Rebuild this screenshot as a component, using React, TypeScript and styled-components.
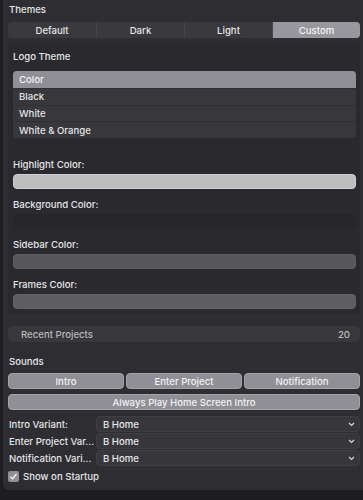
import React from "react";
import styled, { createGlobalStyle } from "styled-components";

const Global = createGlobalStyle`
  html, body { margin: 0; padding: 0; background: #1d1d1f; }
  body { font-family: Inter, "Noto Sans", sans-serif; -webkit-font-smoothing: antialiased; }
  * { box-sizing: border-box; }
`;

const Outer = styled.div`
  width: 363px;
  height: 500px;
  background: #1d1d1f;
  display: flex;
  overflow: hidden;
`;

const Panel = styled.div`
  margin-left: 3px;
  width: 360px;
  height: 490px;
  background: #2e2e32;
  border-radius: 0 0 0 6px;
  padding: 3px 3px 0 5px;
  display: flex;
  flex-direction: column;
  color: #e4e4e6;
  font-size: 9.6px;
  font-weight: 500;
`;

const SectionTitle = styled.div<{ $mt?: number }>`
  height: 13px;
  line-height: 13px;
  padding-left: 1px;
  margin-top: ${(p) => p.$mt ?? 0}px;
  color: #e6e6e8;
`;

const Segmented = styled.div<{ $mt?: number }>`
  margin-top: ${(p) => p.$mt ?? 0}px;
  display: grid;
  grid-auto-flow: column;
  grid-auto-columns: 1fr;
  height: 16px;
  border-radius: 4px;
  overflow: hidden;
  background: #3a3a3e;
`;

const Seg = styled.div<{ $active?: boolean }>`
  display: flex;
  align-items: center;
  justify-content: center;
  background: ${(p) => (p.$active ? "#97979d" : "#3a3a3e")};
  color: ${(p) => (p.$active ? "#f4f4f6" : "#e4e4e6")};
  border-left: 1px solid #46464a;
  &:first-child { border-left: none; }
`;

const ButtonRow = styled.div<{ $mt?: number }>`
  margin-top: ${(p) => p.$mt ?? 0}px;
  display: grid;
  grid-template-columns: 1fr 1fr 1fr;
  gap: 2px;
`;

const GrayButton = styled.div`
  height: 16px;
  border-radius: 4px;
  background: #8f8f95;
  border: 1px solid #a3a3a8;
  color: #f2f2f4;
  display: flex;
  align-items: center;
  justify-content: center;
`;

const WideButton = styled(GrayButton)`
  margin-top: 5px;
`;

const Card = styled.div`
  margin-top: 6px;
  background: #2a2a2e;
  border-radius: 5px;
  padding: 6px 4px 5px 5px;
  display: flex;
  flex-direction: column;
`;

const CardLabel = styled.div<{ $mt?: number }>`
  margin-top: ${(p) => p.$mt ?? 0}px;
  height: 13px;
  line-height: 13px;
  color: #e4e4e6;
`;

const List = styled.div`
  margin-top: 8px;
  background: #38383c;
  border-radius: 4px;
  overflow: hidden;
  display: flex;
  flex-direction: column;
`;

const ListItem = styled.div<{ $selected?: boolean }>`
  height: 16.75px;
  display: flex;
  align-items: center;
  padding-left: 6px;
  background: ${(p) => (p.$selected ? "#8f8f95" : "#38383c")};
  color: ${(p) => (p.$selected ? "#f4f4f6" : "#e4e4e6")};
  border-top: 1px solid #2f2f33;
  &:first-child { border-top: none; }
`;

const Swatch = styled.div<{ $color: string; $border: string }>`
  margin-top: 3px;
  height: 15px;
  border-radius: 4px;
  background: ${(p) => p.$color};
  border: 1px solid ${(p) => p.$border};
`;

const StatRow = styled.div`
  margin-top: 12px;
  height: 16px;
  border-radius: 5px;
  background: #38383c;
  display: flex;
  align-items: center;
  justify-content: space-between;
  padding: 0 10px 0 13px;
  color: #b9b9bd;
`;

const VariantGrid = styled.div`
  margin-top: 6px;
  display: grid;
  grid-template-columns: 88px 1fr;
  row-gap: 1px;
`;

const VariantLabel = styled.div`
  height: 16px;
  display: flex;
  align-items: center;
  padding-left: 1px;
  white-space: nowrap;
  overflow: hidden;
  color: #e4e4e6;
`;

const Select = styled.div`
  height: 16px;
  background: #37373b;
  border: 1px solid #3f3f43;
  border-radius: 4px;
  display: flex;
  align-items: center;
  justify-content: space-between;
  padding: 0 4px 0 6px;
  color: #e8e8ea;
`;

const CheckRow = styled.label`
  margin-top: 3px;
  height: 14px;
  display: flex;
  align-items: center;
  gap: 4px;
  color: #e4e4e6;
`;

const CheckBox = styled.span`
  width: 11px;
  height: 11px;
  border-radius: 2px;
  background: #8f8f95;
  display: flex;
  align-items: center;
  justify-content: center;
`;

const Chevron = () => (
  <svg width="7" height="5" viewBox="0 0 7 5">
    <path d="M1 1 L3.5 3.5 L6 1" fill="none" stroke="#d8d8dc" strokeWidth="1.2" />
  </svg>
);

const Check = () => (
  <svg width="9" height="9" viewBox="0 0 9 9">
    <path d="M1.5 4.7 L3.6 6.8 L7.5 2" fill="none" stroke="#f2f2f4" strokeWidth="1.4" />
  </svg>
);

const variants = ["Intro Variant:", "Enter Project Var...", "Notification Vari..."];

export default function App() {
  return (
    <>
      <Global />
      <Outer>
        <Panel>
          <SectionTitle>Themes</SectionTitle>
          <Segmented $mt={6}>
            <Seg>Default</Seg>
            <Seg>Dark</Seg>
            <Seg>Light</Seg>
            <Seg $active>Custom</Seg>
          </Segmented>
          <Card>
            <CardLabel>Logo Theme</CardLabel>
            <List>
              <ListItem $selected>Color</ListItem>
              <ListItem>Black</ListItem>
              <ListItem>White</ListItem>
              <ListItem>White &amp; Orange</ListItem>
            </List>
            <CardLabel $mt={20}>Highlight Color:</CardLabel>
            <Swatch $color="#bdbdbd" $border="#d0d0d2" />
            <CardLabel $mt={9}>Background Color:</CardLabel>
            <Swatch $color="#27272a" $border="#27272a" />
            <CardLabel $mt={9}>Sidebar Color:</CardLabel>
            <Swatch $color="#58585c" $border="#5e5e62" />
            <CardLabel $mt={9}>Frames Color:</CardLabel>
            <Swatch $color="#5e5e60" $border="#646466" />
          </Card>
          <StatRow>
            <span>Recent Projects</span>
            <span>20</span>
          </StatRow>
          <SectionTitle $mt={13}>Sounds</SectionTitle>
          <ButtonRow $mt={5}>
            <GrayButton>Intro</GrayButton>
            <GrayButton>Enter Project</GrayButton>
            <GrayButton>Notification</GrayButton>
          </ButtonRow>
          <WideButton>Always Play Home Screen Intro</WideButton>
          <VariantGrid>
            {variants.map((v) => (
              <React.Fragment key={v}>
                <VariantLabel>{v}</VariantLabel>
                <Select>
                  <span>B Home</span>
                  <Chevron />
                </Select>
              </React.Fragment>
            ))}
          </VariantGrid>
          <CheckRow>
            <CheckBox>
              <Check />
            </CheckBox>
            Show on Startup
          </CheckRow>
        </Panel>
      </Outer>
    </>
  );
}
